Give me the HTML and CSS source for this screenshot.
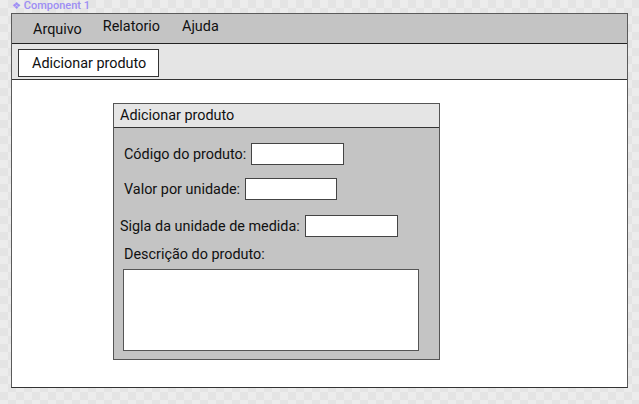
FILE: index.html
```html
<!DOCTYPE html>
<html lang="pt">
<head>
  <meta charset="UTF-8" />
  <title>Component 1</title>
  <link rel="stylesheet" href="styles.css">
</head>
<body>
  <div class="component-label"><span class="component-icon">❖</span> Component 1</div>

  <div class="window">
    <nav class="menu-bar">
      <span class="menu-item menu-item-low">Arquivo</span>
      <span class="menu-item">Relatorio</span>
      <span class="menu-item menu-item-last">Ajuda</span>
    </nav>

    <div class="toolbar">
      <button class="tool-btn">Adicionar produto</button>
    </div>

    <main class="content">
      <section class="dialog">
        <div class="dialog-title">Adicionar produto</div>
        <div class="dialog-body">
          <div class="field field-first">
            <label>Código do produto:</label>
            <div class="input input-code"></div>
          </div>
          <div class="field field-second">
            <label>Valor por unidade:</label>
            <div class="input input-value"></div>
          </div>
          <div class="field field-third">
            <label>Sigla da unidade de medida:</label>
            <div class="input input-unit"></div>
          </div>
          <div class="field-label">Descrição do produto:</div>
          <div class="textarea"></div>
        </div>
      </section>
    </main>
  </div>
</body>
</html>
```

FILE: styles.css
```css
body {
  margin: 0;
  width: 639px;
  height: 404px;
  font-family: Roboto, "Liberation Sans", sans-serif;
  font-size: 14.4px;
  color: #111;
  background-color: #e9e9e9;
  background-image: conic-gradient(#e4e4e4 25%, #ececec 0 50%, #e4e4e4 0 75%, #ececec 0);
  background-size: 16px 16px;
  overflow: hidden;
}

.component-label {
  height: 13px;
  padding-left: 12px;
  font-size: 11px;
  font-weight: 500;
  line-height: 12px;
  color: #9d8ef4;
}

.component-icon {
  font-size: 10px;
}

.window {
  margin-left: 11px;
  width: 615px;
  height: 373px;
  border: 1px solid #5a5a5a;
  border-bottom-color: #333;
  background: #fff;
}

.menu-bar {
  display: flex;
  height: 29px;
  background: #c4c4c4;
  border-bottom: 1px solid #222;
}

.menu-item {
  line-height: 26px;
  margin-left: 21px;
}

.menu-item-low {
  line-height: 32px;
}

.menu-item-last {
  margin-left: 22px;
}

.toolbar {
  box-sizing: border-box;
  height: 36px;
  padding: 5px 0 0 6px;
  background: #e5e5e5;
  border-bottom: 1px solid #333;
}

.tool-btn {
  display: block;
  width: 141px;
  height: 28px;
  padding: 0 0 0 13px;
  text-align: left;
  font-family: inherit;
  font-size: 14.4px;
  color: #111;
  background: #fff;
  border: 1px solid #333;
  border-radius: 0;
}

.content {
  padding: 23px 0 0 101px;
}

.dialog {
  width: 325px;
  height: 255px;
  border: 1px solid #555;
  background: #c4c4c4;
}

.dialog-title {
  height: 23px;
  line-height: 23px;
  padding-left: 6px;
  background: #e5e5e5;
  border-bottom: 1px solid #333;
}

.dialog-body {
  padding-left: 10px;
}

.field {
  display: flex;
  align-items: center;
  gap: 5px;
}

.field-first {
  margin-top: 15px;
}

.field-second {
  margin-top: 13px;
}

.field-third {
  margin-top: 15px;
  margin-left: -4px;
}

.input {
  height: 20px;
  background: #fff;
  border: 1px solid #444;
}

.input-code {
  width: 91px;
}

.input-value {
  width: 90px;
}

.input-unit {
  width: 91px;
}

.field-label {
  margin-top: 9px;
  line-height: 17px;
}

.textarea {
  margin-top: 6px;
  margin-left: -1px;
  width: 294px;
  height: 80px;
  background: #fff;
  border: 1px solid #555;
}
```
